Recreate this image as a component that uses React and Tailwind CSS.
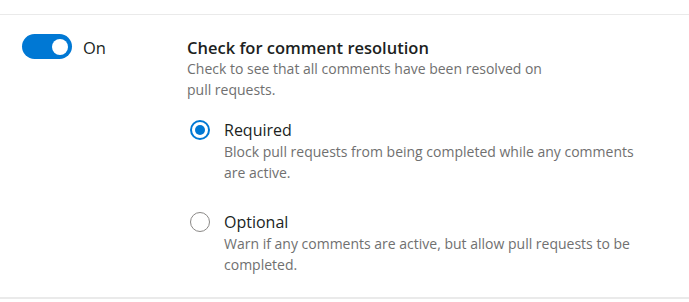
export default function App() {
  const font = { fontFamily: '"Open Sans", "Noto Sans", sans-serif' };
  return (
    <div className="w-[689px] h-[302px] bg-white overflow-hidden" style={font}>
      <div className="h-[14px]" />
      <div className="border-t border-[#eaeaea] h-[285px] border-b-2 border-b-[#eaeaea] flex px-[22px] pt-[19px]">
        <div className="w-[165px] flex items-start">
          <button className="w-[50px] h-[25px] rounded-full bg-[#0078d4] flex items-center justify-end pr-[4px]">
            <span className="w-[16px] h-[16px] rounded-full bg-white" />
          </button>
          <span className="ml-[11px] text-[16.5px] leading-[27px] text-[#201f1e]">On</span>
        </div>
        <div className="flex flex-col">
          <div className="text-[16.5px] font-semibold leading-[22px] text-[#201f1e] mt-[3px]">Check for comment resolution</div>
          <div className="text-[14px] leading-[21px] text-[#707070] w-[375px] mt-[-1px]">
            Check to see that all comments have been resolved on pull requests.
          </div>
          <div className="flex flex-col mt-[19px] gap-[28px]">
            <div className="flex items-start">
              <div className="w-[20px] h-[20px] rounded-full border-2 border-[#0078d4] bg-white mt-[1px] ml-[3px] flex items-center justify-center">
                <div className="w-[10px] h-[10px] rounded-full bg-[#0078d4]" />
              </div>
              <div className="ml-[14px] flex flex-col">
                <div className="text-[16px] leading-[22px] text-[#201f1e]">Required</div>
                <div className="text-[14px] leading-[21px] text-[#707070] w-[425px]">
                  Block pull requests from being completed while any comments are active.
                </div>
              </div>
            </div>
            <div className="flex items-start">
              <div className="w-[20px] h-[20px] rounded-full border border-[#8a8886] bg-white mt-[1px] ml-[3px]" />
              <div className="ml-[14px] flex flex-col">
                <div className="text-[16px] leading-[22px] text-[#201f1e]">Optional</div>
                <div className="text-[14px] leading-[21px] text-[#707070] w-[425px]">
                  Warn if any comments are active, but allow pull requests to be completed.
                </div>
              </div>
            </div>
          </div>
        </div>
      </div>
    </div>
  );
}
